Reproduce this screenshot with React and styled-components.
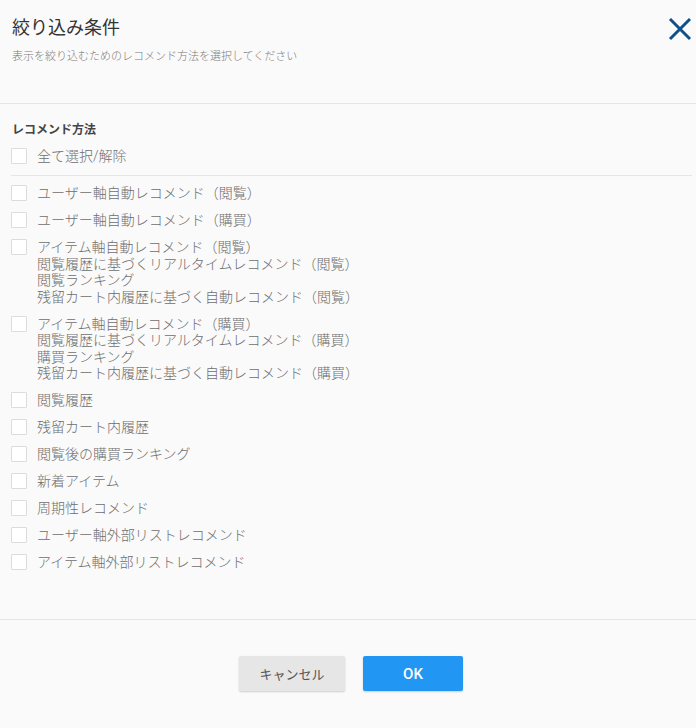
import React, { useState } from 'react'
import styled, { createGlobalStyle } from 'styled-components'

const GlobalStyle = createGlobalStyle`
  html, body {
    margin: 0;
    padding: 0;
    background: #fafafa;
    font-family: Roboto, "Noto Sans CJK JP", sans-serif;
  }
  * { box-sizing: border-box; }
`

const Dialog = styled.div`
  width: 696px;
  height: 728px;
  background: #fafafa;
  display: flex;
  flex-direction: column;
`

const Header = styled.div`
  position: relative;
  padding: 16px 12px 38px;
  border-bottom: 1px solid #e5e5e5;
`

const Title = styled.h2`
  margin: 0;
  font-size: 18px;
  line-height: 24px;
  font-weight: 400;
  color: #333;
`

const Sub = styled.p`
  margin: 9px 0 0;
  font-size: 11px;
  line-height: 16px;
  font-weight: 300;
  color: #7a7a7a;
`

const Close = styled.button`
  position: absolute;
  top: 17px;
  right: 4px;
  width: 24px;
  height: 24px;
  padding: 0;
  border: 0;
  background: none;
  cursor: pointer;
`

const Body = styled.div`
  flex: 1;
  padding: 18px 4px 0 11px;
`

const Label = styled.div`
  font-size: 12px;
  line-height: 17px;
  font-weight: 700;
  color: #444;
  margin-bottom: 9px;
  padding-left: 1px;
`

const Row = styled.label`
  display: flex;
  align-items: flex-start;
  gap: 10px;
  margin-bottom: 10.5px;
  cursor: pointer;
`

const Box = styled.span`
  flex: none;
  width: 16px;
  height: 16px;
  border: 1px solid #dcdcdc;
  border-radius: 1px;
  background: ${p => (p.$on ? '#2196f3' : '#fff')};
  display: flex;
  align-items: center;
  justify-content: center;
`

const Text = styled.span`
  font-size: 14px;
  line-height: 16.5px;
  font-weight: 300;
  color: #6e6e6e;
`

const Line = styled.span`
  display: block;
`

const Divider = styled.hr`
  margin: 0 0 9px;
  border: 0;
  border-top: 1px solid #e5e5e5;
`

const Footer = styled.div`
  border-top: 1px solid #e5e5e5;
  height: 109px;
  padding: 36px 0 0 6px;
  display: flex;
  justify-content: center;
  align-items: flex-start;
  gap: 18px;
`

const Btn = styled.button`
  height: 35px;
  width: ${p => p.$w}px;
  border: 0;
  border-radius: 2px;
  font-family: Roboto, "Noto Sans CJK JP", sans-serif;
  font-size: ${p => (p.$primary ? '15px' : '13px')};
  font-weight: ${p => (p.$primary ? 500 : 400)};
  color: ${p => (p.$primary ? '#fff' : '#555')};
  background: ${p => (p.$primary ? '#2196f3' : '#e6e6e6')};
  box-shadow: 0 1px 2px rgba(0, 0, 0, 0.18);
  cursor: pointer;
`

const items = [
  ['ユーザー軸自動レコメンド（閲覧）'],
  ['ユーザー軸自動レコメンド（購買）'],
  [
    'アイテム軸自動レコメンド（閲覧）',
    '閲覧履歴に基づくリアルタイムレコメンド（閲覧）',
    '閲覧ランキング',
    '残留カート内履歴に基づく自動レコメンド（閲覧）',
  ],
  [
    'アイテム軸自動レコメンド（購買）',
    '閲覧履歴に基づくリアルタイムレコメンド（購買）',
    '購買ランキング',
    '残留カート内履歴に基づく自動レコメンド（購買）',
  ],
  ['閲覧履歴'],
  ['残留カート内履歴'],
  ['閲覧後の購買ランキング'],
  ['新着アイテム'],
  ['周期性レコメンド'],
  ['ユーザー軸外部リストレコメンド'],
  ['アイテム軸外部リストレコメンド'],
]

const Check = () => (
  <svg width="12" height="12" viewBox="0 0 12 12">
    <path d="M2 6.5l2.5 2.5L10 3.5" fill="none" stroke="#fff" strokeWidth="2" />
  </svg>
)

export default function App() {
  const [sel, setSel] = useState([])
  const allOn = sel.length === items.length

  const toggle = i =>
    setSel(s => (s.includes(i) ? s.filter(x => x !== i) : [...s, i]))

  return (
    <Dialog>
      <GlobalStyle />
      <Header>
        <Title>絞り込み条件</Title>
        <Sub>表示を絞り込むためのレコメンド方法を選択してください</Sub>
        <Close aria-label="close">
          <svg width="24" height="24" viewBox="0 0 24 24">
            <path d="M2 2L22 22M22 2L2 22" stroke="#0f4f8a" strokeWidth="3" />
          </svg>
        </Close>
      </Header>
      <Body>
        <Label>レコメンド方法</Label>
        <Row onClick={() => setSel(allOn ? [] : items.map((_, i) => i))}>
          <Box $on={allOn}>{allOn && <Check />}</Box>
          <Text>全て選択/解除</Text>
        </Row>
        <Divider />
        {items.map((lines, i) => (
          <Row key={i} onClick={() => toggle(i)}>
            <Box $on={sel.includes(i)}>{sel.includes(i) && <Check />}</Box>
            <Text>
              {lines.map(l => (
                <Line key={l}>{l}</Line>
              ))}
            </Text>
          </Row>
        ))}
      </Body>
      <Footer>
        <Btn $w={106}>キャンセル</Btn>
        <Btn $w={100} $primary>OK</Btn>
      </Footer>
    </Dialog>
  )
}
